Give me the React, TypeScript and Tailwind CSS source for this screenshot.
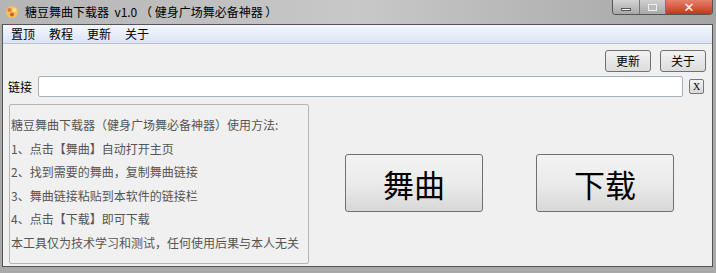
import React from 'react';

const FONT = { fontFamily: '"Noto Sans CJK SC", "Liberation Sans", sans-serif' };

const steps = [
  '糖豆舞曲下载器（健身广场舞必备神器）使用方法:',
  '1、点击【舞曲】自动打开主页',
  '2、找到需要的舞曲，复制舞曲链接',
  '3、舞曲链接粘贴到本软件的链接栏',
  '4、点击【下载】即可下载',
  '本工具仅为技术学习和测试，任何使用后果与本人无关',
];

const menus = ['置顶', '教程', '更新', '关于'];

const AppIcon = () => (
  <svg width="14" height="14" viewBox="0 0 14 14">
    <circle cx="7" cy="7" r="6" fill="#f2c45a" />
    <circle cx="4.5" cy="5" r="2" fill="#e8783a" />
    <circle cx="9.5" cy="5" r="2" fill="#f7e08a" />
    <circle cx="7" cy="9.5" r="2" fill="#e05a3a" />
  </svg>
);

const App = () => {
  return (
    <div className="w-[716px] h-[273px] bg-[#a9a9a9] relative overflow-hidden" style={FONT}>
      {/* title bar */}
      <div className="h-[24px] flex items-center pl-[5px] bg-gradient-to-r from-[#b5b5b5] via-[#c8c8c8] to-[#a4a4a4] relative">
        <AppIcon />
        <span className="ml-[6px] text-[12px] text-black leading-none">
          糖豆舞曲下载器&nbsp; v1.0 （ 健身广场舞必备神器 ）
        </span>
        <div className="absolute right-[3px] top-0 flex h-[15px] rounded-b-[4px] border border-t-0 border-[#555] overflow-hidden">
          <div className="w-[27px] bg-gradient-to-b from-[#d4d4d4] to-[#a8a8a8] border-r border-[#777] flex items-end justify-center pb-[3px]">
            <div className="w-[10px] h-[3px] bg-white border border-[#555]" />
          </div>
          <div className="w-[26px] bg-gradient-to-b from-[#d0d0d0] to-[#a8a8a8] border-r border-[#777] flex items-center justify-center">
            <div className="w-[9px] h-[7px] border border-[#eee] bg-[#bbb]" />
          </div>
          <div className="w-[46px] bg-gradient-to-b from-[#e8806a] to-[#c2351c] flex items-center justify-center">
            <span className="text-white text-[13px] font-bold leading-none" style={{ fontFamily: '"DejaVu Sans", sans-serif' }}>
              ✕
            </span>
          </div>
        </div>
      </div>

      {/* client area */}
      <div className="absolute left-[2px] right-[3px] top-[24px] bottom-[6px] border border-[#555] bg-[#f0f0f0] flex flex-col">
        {/* menu bar */}
        <div className="h-[19px] flex items-center gap-[14px] pl-[8px] bg-gradient-to-b from-[#f4f7fd] to-[#dbe3f4] border-b border-[#b9c3d6] text-[12px] text-black">
          {menus.map((m) => (
            <span key={m} className="leading-none">
              {m}
            </span>
          ))}
        </div>

        <div className="flex justify-end gap-[9px] pr-[6px] mt-[6px]">
          <button className="w-[46px] h-[22px] rounded-[3px] border border-[#707070] bg-gradient-to-b from-[#f2f2f2] to-[#dcdcdc] text-[12px] leading-none">
            更新
          </button>
          <button className="w-[46px] h-[22px] rounded-[3px] border border-[#707070] bg-gradient-to-b from-[#f2f2f2] to-[#dcdcdc] text-[12px] leading-none">
            关于
          </button>
        </div>

        <div className="flex items-center mt-[4px] pl-[5px] pr-[6px]">
          <span className="text-[12px] leading-none">链接</span>
          <div className="ml-[6px] w-[645px] h-[21px] bg-white border border-[#a6b0bd] rounded-[2px]" />
          <div className="ml-[6px] w-[15px] h-[15px] border border-[#777] rounded-[2px] bg-gradient-to-b from-[#f5f5f5] to-[#d8d8d8] flex items-center justify-center text-[10px] leading-none" style={{ fontFamily: '"Liberation Serif", serif' }}>
            X
          </div>
        </div>

        <div className="flex items-start mt-[7px] pl-[6px]">
          <div className="w-[300px] h-[160px] border border-[#b5b5b5] rounded-[2px] pl-[1px] pt-[12px] flex flex-col gap-[7.5px] text-[12px] text-[#555] leading-[16px]">
            {steps.map((s) => (
              <div key={s} className="whitespace-nowrap">
                {s}
              </div>
            ))}
          </div>
          <div className="flex gap-[53px] ml-[36px] mt-[50px]">
            <button className="w-[138px] h-[58px] rounded-[3px] border border-[#707070] bg-gradient-to-b from-[#f3f3f3] via-[#ebebeb] to-[#d8d8d8] text-[31px] leading-none text-black">
              舞曲
            </button>
            <button className="w-[138px] h-[58px] rounded-[3px] border border-[#707070] bg-gradient-to-b from-[#f3f3f3] via-[#ebebeb] to-[#d8d8d8] text-[31px] leading-none text-black">
              下载
            </button>
          </div>
        </div>
      </div>
    </div>
  );
};

export default App;
